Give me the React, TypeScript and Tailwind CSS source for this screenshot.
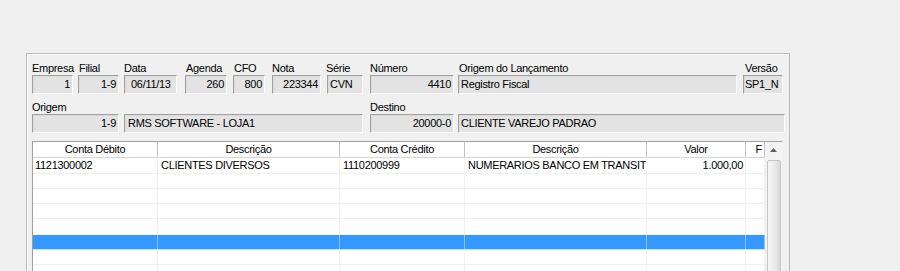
import React from "react";

const FONT = { fontFamily: '"Liberation Sans", Arial, sans-serif' };

type FieldProps = {
  cls: string;
  label?: string;
  value?: string;
  right?: boolean;
  padCls?: string;
  labelCls?: string;
};

function Field({ cls, label, value, right, padCls, labelCls }: FieldProps) {
  return (
    <div className={"flex flex-col shrink-0 " + cls}>
      <div className={"h-[13px] leading-[13px] whitespace-nowrap " + (labelCls ?? "")}>{label ?? ""}</div>
      <div
        className={
          "h-[19px] flex items-center overflow-hidden whitespace-nowrap bg-[#e3e3e3] border border-t-[#a0a0a0] border-l-[#a0a0a0] border-r-[#fbfbfb] border-b-[#fbfbfb] shadow-[inset_1px_1px_0_#dadada] " +
          (right ? "justify-end pr-[2px] " : "justify-start ") +
          (padCls ?? "pl-[2px]")
        }
      >
        {value}
      </div>
    </div>
  );
}

const cols = [
  { w: "w-[125px]", title: "Conta Débito" },
  { w: "w-[182px]", title: "Descrição" },
  { w: "w-[125px]", title: "Conta Crédito" },
  { w: "w-[182px]", title: "Descrição" },
  { w: "w-[99px]", title: "Valor" },
  { w: "w-[19px]", title: "F" },
];

const row1 = ["1121300002", "CLIENTES DIVERSOS", "1110200999", "NUMERARIOS BANCO EM TRANSITO", "1.000,00", ""];

function Row({ data, selected }: { data?: string[]; selected?: boolean }) {
  return (
    <div className={"flex h-[16px] border-b " + (selected ? "bg-[#3399ff] border-b-[#cfe4fa]" : "bg-white border-b-[#f0f0f0]")}>
      {cols.map((c, i) => (
        <div
          key={i}
          className={
            "shrink-0 h-full flex items-center overflow-hidden whitespace-nowrap border-r " +
            c.w +
            " " +
            (selected ? "border-r-[#8cc2f7] " : "border-r-[#f0f0f0] ") +
            (i === 4 ? "justify-end pr-[2px]" : i === 0 ? "pl-[2px]" : "pl-[3px]")
          }
        >
          {data ? data[i] : ""}
        </div>
      ))}
    </div>
  );
}

export default function App() {
  return (
    <div className="w-[900px] h-[271px] overflow-hidden bg-[#f0f0f0] text-[11px] tracking-[-0.3px] text-black pt-[53px] pl-[26px]" style={FONT}>
      <div className="w-[764px] h-[240px] border border-[#bcbcbc] shadow-[inset_1px_1px_0_#ffffff] pt-[8px] pl-[5px]">
        {/* Row 1 */}
        <div className="flex">
          <Field cls="w-[41px]" label="Empresa" value="1" right />
          <Field cls="w-[41px] ml-[5px]" label="Filial" value="1-9" right labelCls="pl-[1px]" />
          <Field cls="w-[53px] ml-[5px]" label="Data" value="06/11/13" padCls="pl-[6px]" />
          <Field cls="w-[42px] ml-[8px]" label="Agenda" value="260" right labelCls="pl-[1px]" />
          <Field cls="w-[32px] ml-[6px]" label="CFO" value="800" right labelCls="pl-[1px]" />
          <Field cls="w-[49px] ml-[7px]" label="Nota" value="223344" right />
          <Field cls="w-[36px] ml-[6px]" label="Série" value="CVN" padCls="pl-[2px]" labelCls="-ml-[1px]" />
          <Field cls="w-[84px] ml-[7px]" label="Número" value="4410" right />
          <Field cls="w-[279px] ml-[4px]" label="Origem do Lançamento" value="Registro Fiscal" padCls="pl-[2px]" labelCls="pl-[1px]" />
          <Field cls="w-[40px] ml-[6px]" label="Versão" value="SP1_N" padCls="pl-[1px]" labelCls="pl-[2px]" />
        </div>
        {/* Row 2 */}
        <div className="flex mt-[7px]">
          <Field cls="w-[87px]" label="Origem" value="1-9" right />
          <Field cls="w-[239px] ml-[5px]" value="RMS SOFTWARE - LOJA1" padCls="pl-[3px]" />
          <Field cls="w-[84px] ml-[7px]" label="Destino" value="20000-0" right />
          <Field cls="w-[327px] ml-[4px]" value="CLIENTE VAREJO PADRAO" padCls="pl-[2px]" />
        </div>
        {/* Grid */}
        <div className="mt-[8px] w-[751px] h-[140px] flex border border-t-[#a0a0a0] border-l-[#a0a0a0] border-r-[#f4f4f4] border-b-[#f4f4f4] bg-white overflow-hidden">
          <div className="flex flex-col">
            <div className="flex h-[16px] border-b border-b-[#d5d5d5] bg-white">
              {cols.map((c, i) => (
                <div
                  key={i}
                  className={
                    "shrink-0 h-full flex items-center overflow-hidden whitespace-nowrap border-r border-r-[#c4c4c4] " +
                    c.w +
                    " " +
                    (i === 5 ? "justify-end pr-[2px]" : "justify-center")
                  }
                >
                  {c.title}
                </div>
              ))}
            </div>
            <Row data={row1} />
            <Row />
            <Row />
            <Row />
            <Row />
            <Row selected />
            <Row />
            <Row />
          </div>
          <div className="w-[17px] shrink-0 flex flex-col bg-[#f3f3f3]">
            <div className="h-[17px] flex items-center justify-center">
              <svg width="7" height="4" viewBox="0 0 7 4">
                <path d="M3.5 0 L7 4 L0 4 Z" fill="#606060" />
              </svg>
            </div>
            <div className="mt-[2px] ml-[2px] w-[14px] h-[130px] rounded-[2px] border border-[#c6c6c6] bg-[linear-gradient(to_right,#f6f6f6,#e9e9e9_60%,#d8d8d8)]" />
          </div>
        </div>
      </div>
    </div>
  );
}
